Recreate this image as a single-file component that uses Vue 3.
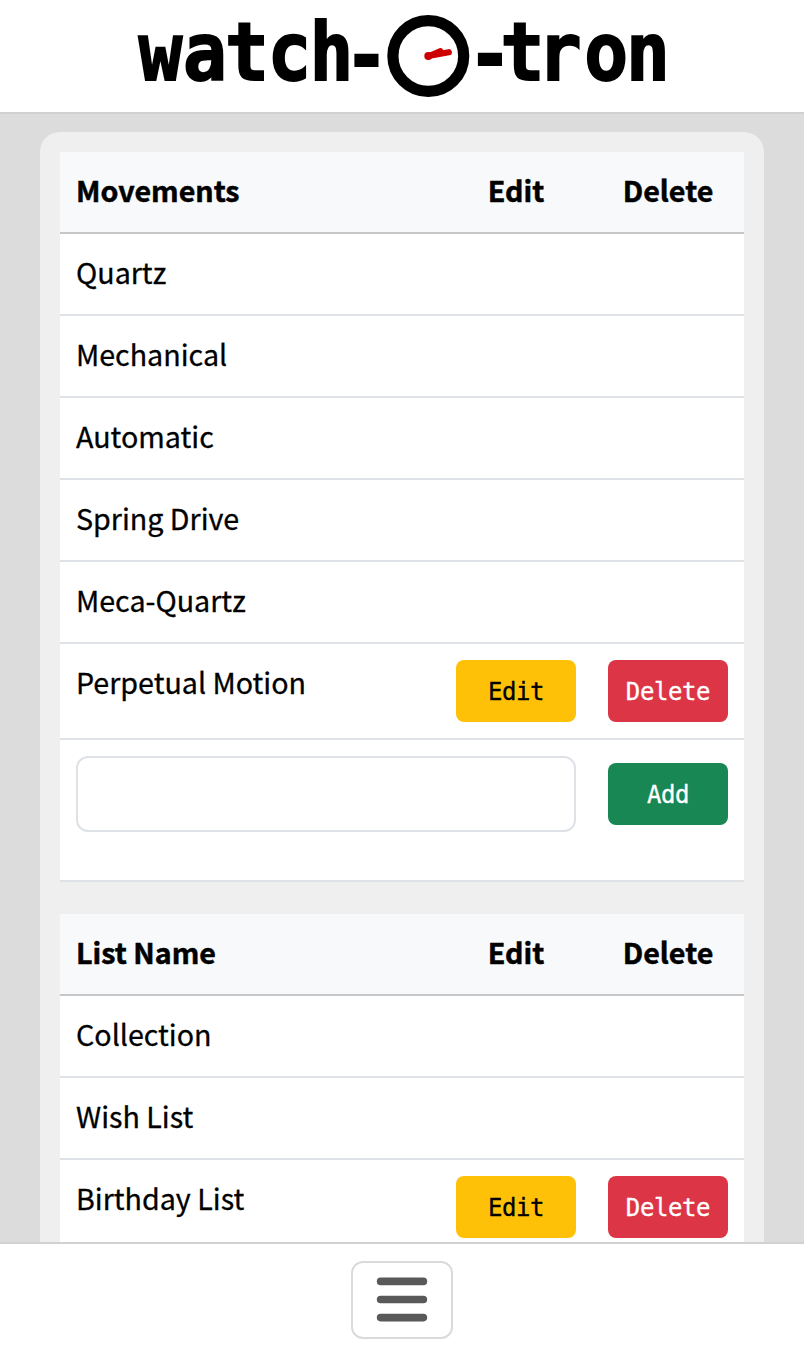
<script setup>
const tables = [
  {
    title: 'Movements',
    rows: [
      { name: 'Quartz' },
      { name: 'Mechanical' },
      { name: 'Automatic' },
      { name: 'Spring Drive' },
      { name: 'Meca-Quartz' },
      { name: 'Perpetual Motion', custom: true },
    ],
    addRow: true,
  },
  {
    title: 'List Name',
    rows: [
      { name: 'Collection' },
      { name: 'Wish List' },
      { name: 'Birthday List', custom: true },
    ],
  },
]
</script>

<template>
  <div class="app">
    <header class="top">
      <svg class="logo" width="540" height="100" viewBox="132 6 540 100" role="img" aria-label="watch-O-tron">
        <g class="word">
          <text transform="scale(.9 1)" x="178.3 227.7 274.5 321.5 368.2 407.3" y="80.5 80.5 80.5 80.5 80.5 82.7">watch-</text>
          <text transform="scale(.9 1)" x="544.3 580.5 622 673.5 720" y="82 80 80 80 80">-tron</text>
        </g>
        <circle cx="428.3" cy="56" r="35.4" fill="none" stroke="#000" stroke-width="11.2" />
        <g stroke="#c00" stroke-linecap="round" fill="none">
          <path d="M428.3 56 448.8 52.2" stroke-width="6.2" />
          <path d="M428.3 56 440.5 50.8" stroke-width="5.5" />
          <path d="M428.3 56h.01" stroke-width="8" />
        </g>
      </svg>
    </header>

    <main class="content">
      <div class="panel">
        <section v-for="t in tables" :key="t.title" class="table">
          <div class="row head">
            <div class="cell">{{ t.title }}</div>
            <div class="cell mid">Edit</div>
            <div class="cell mid">Delete</div>
          </div>
          <div v-for="r in t.rows" :key="r.name" class="row">
            <div class="cell">{{ r.name }}</div>
            <div class="cell actions"><button v-if="r.custom" class="btn edit">Edit</button></div>
            <div class="cell actions"><button v-if="r.custom" class="btn delete">Delete</button></div>
          </div>
          <div v-if="t.addRow" class="row add-row">
            <div class="cell actions wide"><input class="field" type="text" /></div>
            <div class="cell actions"><button class="btn add">Add</button></div>
          </div>
        </section>
      </div>
    </main>

    <footer class="bottom">
      <button class="menu" aria-label="Menu">
        <svg width="60" height="60" viewBox="0 0 30 30">
          <path d="M4.3 5.7h21.4M4.3 14.75h21.4M4.3 23.8h21.4" stroke="#595959" stroke-width="3.8" stroke-linecap="round" />
        </svg>
      </button>
    </footer>
  </div>
</template>

<style>
body {
  margin: 0;
  overflow: hidden;
}
</style>

<style scoped>
.app {
  height: 1355px;
  display: flex;
  flex-direction: column;
  background: #dcdcdc;
  color: #000;
  font-family: "Noto Sans CJK SC", "Noto Sans", sans-serif;
  overflow: hidden;
}
.app * {
  box-sizing: border-box;
}
.top {
  flex: none;
  height: 114px;
  background: #fff;
  border-bottom: 2px solid #d1d1d1;
  display: flex;
  justify-content: center;
  padding-top: 6px;
}
.logo {
  display: block;
  flex: none;
}
.word {
  font: bold 81px "DejaVu Sans Mono", monospace;
  text-anchor: middle;
  stroke: #000;
  stroke-width: 1.8px;
}
.content {
  flex: 1;
  min-height: 0;
  overflow: hidden;
  padding: 18px 40px 0;
}
.panel {
  background: #efefef;
  border-radius: 20px;
  padding: 20px;
  display: flex;
  flex-direction: column;
  gap: 32px;
}
.row {
  display: grid;
  grid-template-columns: 1fr 152px 152px;
  background: #fff;
  border-bottom: 2px solid #dee2e6;
}
.head {
  background: #f8f9fb;
  border-bottom-color: #c6c7c9;
  font-weight: 700;
}
.cell {
  padding: 14px 16px 18px;
  font-size: 28.65px;
  line-height: 48px;
  white-space: nowrap;
  -webkit-text-stroke: 0.3px currentColor;
}
.head .cell {
  -webkit-text-stroke-width: 0.5px;
}
.mid {
  text-align: center;
}
.actions {
  padding: 16px;
}
.wide {
  grid-column: span 2;
}
.add-row {
  height: 142px;
}
.add-row .actions:last-child {
  padding-top: 23px;
}
.field {
  display: block;
  width: 100%;
  height: 76px;
  border: 2px solid #dee2e6;
  border-radius: 12px;
  background: #fff;
  padding: 12px 24px;
  font: inherit;
}
.btn {
  display: block;
  width: 120px;
  height: 62px;
  padding: 2px 0 0;
  border: 0;
  border-radius: 8px;
  color: #fff;
  font: 24px/60px "DejaVu Sans Mono", monospace;
  letter-spacing: -0.4px;
  -webkit-text-stroke: 0.3px currentColor;
}
.edit {
  background: #ffc107;
  color: #000;
}
.delete {
  background: #dc3545;
}
.add {
  background: #198754;
}
.bottom {
  flex: none;
  height: 113px;
  background: #fff;
  border-top: 2px solid #d1d1d1;
  display: flex;
  justify-content: center;
  padding-top: 17px;
}
.menu {
  width: 102px;
  height: 78px;
  padding: 0;
  background: #fff;
  border: 2px solid #dadada;
  border-radius: 12px;
  display: flex;
  align-items: center;
  justify-content: center;
}
</style>
